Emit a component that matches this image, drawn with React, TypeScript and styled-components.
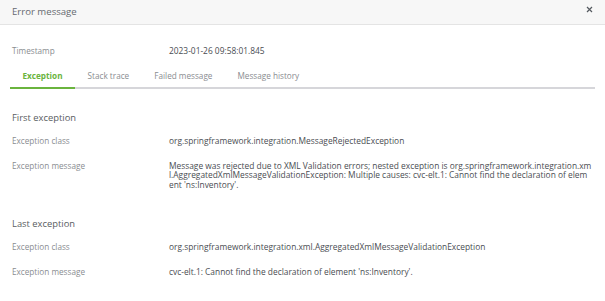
import React from "react";
import styled, { createGlobalStyle } from "styled-components";

const Global = createGlobalStyle`
  html, body { margin: 0; padding: 0; background: #ffffff; }
  body { font-family: "Open Sans", "Noto Sans", sans-serif; }
`;

const Dialog = styled.div`
  width: 605px;
  height: 301px;
  background: #fff;
  overflow: hidden;
`;

const Header = styled.div`
  height: 24px;
  border-bottom: 1px solid #e4e4e4;
  background: #f7f7f7;
  display: flex;
  align-items: center;
  justify-content: space-between;
  padding: 0 12px 0 12px;
`;

const Title = styled.div`
  font-size: 9.6px;
  color: #666a70;
  line-height: 12px;
`;

const Close = styled.button`
  border: 0;
  background: none;
  padding: 0;
  margin-top: -6px;
  width: 8px;
  height: 8px;
  display: flex;
  align-items: center;
  justify-content: center;
  cursor: pointer;
`;

const Body = styled.div`
  padding: 0 10px;
`;

const Row = styled.div<{ $top: number }>`
  display: grid;
  grid-template-columns: 159px 1fr;
  margin-top: ${(p) => p.$top}px;
  font-size: 8.2px;
  line-height: 9.6px;
  margin-right: -5px;
`;

const Label = styled.div`
  color: #8a8d91;
  padding-left: 2px;
`;

const Value = styled.div`
  color: #4a4d52;
  font-size: 8.4px;
  word-break: break-all;
`;

const Tabs = styled.div`
  display: flex;
  margin-top: 8px;
  border-bottom: 2px solid #d6d6da;
`;

const Tab = styled.div<{ $active?: boolean }>`
  padding: 7px 12.5px 6px 12.5px;
  font-size: 8.2px;
  line-height: 10px;
  color: ${(p) => (p.$active ? "#6ab43e" : "#8a8d91")};
  font-weight: ${(p) => (p.$active ? 700 : 400)};
  margin-bottom: -2px;
  border-bottom: 2px solid ${(p) => (p.$active ? "#6ab43e" : "transparent")};
`;

const Section = styled.div<{ $top: number }>`
  margin-top: ${(p) => p.$top}px;
  padding-left: 2px;
  font-size: 9.4px;
  line-height: 11px;
  color: #5a5d62;
`;

export default function App() {
  return (
    <Dialog>
      <Global />
      <Header>
        <Title>Error message</Title>
        <Close aria-label="Close">
          <svg width="7" height="7" viewBox="0 0 7 7">
            <path d="M1 1L6 6M6 1L1 6" stroke="#555a60" strokeWidth="1.2" />
          </svg>
        </Close>
      </Header>
      <Body>
        <Row $top={21}>
          <Label>Timestamp</Label>
          <Value>2023-01-26 09:58:01.845</Value>
        </Row>
        <Tabs>
          <Tab $active>Exception</Tab>
          <Tab>Stack trace</Tab>
          <Tab>Failed message</Tab>
          <Tab>Message history</Tab>
        </Tabs>
        <Section $top={23}>First exception</Section>
        <Row $top={13.5}>
          <Label>Exception class</Label>
          <Value>org.springframework.integration.MessageRejectedException</Value>
        </Row>
        <Row $top={15}>
          <Label>Exception message</Label>
          <Value>
            Message was rejected due to XML Validation errors; nested exception is org.springframework.integration.xm
            <br />
            l.AggregatedXmlMessageValidationException: Multiple causes: cvc-elt.1: Cannot find the declaration of elem
            <br />
            ent 'ns:Inventory'.
          </Value>
        </Row>
        <Section $top={29}>Last exception</Section>
        <Row $top={13}>
          <Label>Exception class</Label>
          <Value>org.springframework.integration.xml.AggregatedXmlMessageValidationException</Value>
        </Row>
        <Row $top={14.5}>
          <Label>Exception message</Label>
          <Value>cvc-elt.1: Cannot find the declaration of element 'ns:Inventory'.</Value>
        </Row>
      </Body>
    </Dialog>
  );
}
